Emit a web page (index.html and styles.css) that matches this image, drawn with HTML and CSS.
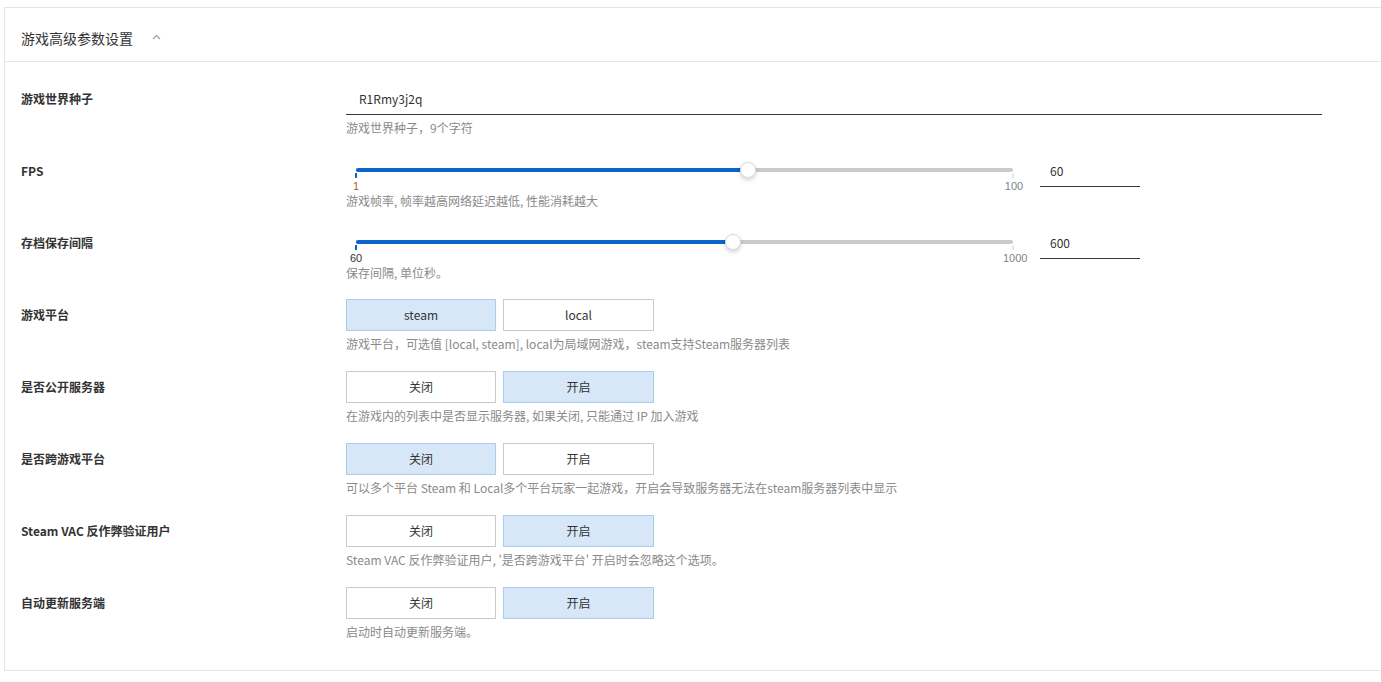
FILE: index.html
```html
<!DOCTYPE html>
<html lang="zh-CN">
<head>
<meta charset="utf-8">
<title>游戏高级参数设置</title>
<link rel="stylesheet" href="styles.css">
</head>
<body>
<div class="card">
  <div class="card-header">
    <span class="card-title">游戏高级参数设置</span>
    <svg class="chevron" width="9" height="6" viewBox="0 0 9 6"><polyline points="1,5 4.5,1.5 8,5" fill="none" stroke="#9aa3ad" stroke-width="1.2"/></svg>
  </div>
  <div class="card-body">
    <div class="row">
      <div class="label">游戏世界种子</div>
      <div class="field">
        <div class="control"><div class="text-input wide">R1Rmy3j2q</div></div>
        <div class="hint">游戏世界种子，9个字符</div>
      </div>
    </div>

    <div class="row slider-row">
      <div class="label">FPS</div>
      <div class="field">
        <div class="control">
          <div class="slider">
            <div class="track">
              <div class="fill" style="width:59.6%"></div>
              <div class="thumb" style="left:59.6%"></div>
            </div>
            <div class="ends"><span class="min">1</span><span class="max">100</span></div>
          </div>
          <div class="text-input small">60</div>
        </div>
        <div class="hint">游戏帧率, 帧率越高网络延迟越低, 性能消耗越大</div>
      </div>
    </div>

    <div class="row slider-row">
      <div class="label">存档保存间隔</div>
      <div class="field">
        <div class="control">
          <div class="slider">
            <div class="track">
              <div class="fill" style="width:57.45%"></div>
              <div class="thumb" style="left:57.45%"></div>
            </div>
            <div class="ends"><span class="min dark">60</span><span class="max">1000</span></div>
          </div>
          <div class="text-input small">600</div>
        </div>
        <div class="hint">保存间隔, 单位秒。</div>
      </div>
    </div>

    <div class="row">
      <div class="label">游戏平台</div>
      <div class="field">
        <div class="control buttons">
          <div class="btn active">steam</div>
          <div class="btn">local</div>
        </div>
        <div class="hint">游戏平台，可选值 [local, steam], local为局域网游戏，steam支持Steam服务器列表</div>
      </div>
    </div>

    <div class="row">
      <div class="label">是否公开服务器</div>
      <div class="field">
        <div class="control buttons">
          <div class="btn">关闭</div>
          <div class="btn active">开启</div>
        </div>
        <div class="hint">在游戏内的列表中是否显示服务器, 如果关闭, 只能通过 IP 加入游戏</div>
      </div>
    </div>

    <div class="row">
      <div class="label">是否跨游戏平台</div>
      <div class="field">
        <div class="control buttons">
          <div class="btn active">关闭</div>
          <div class="btn">开启</div>
        </div>
        <div class="hint">可以多个平台 Steam 和 Local多个平台玩家一起游戏，开启会导致服务器无法在steam服务器列表中显示</div>
      </div>
    </div>

    <div class="row">
      <div class="label">Steam VAC 反作弊验证用户</div>
      <div class="field">
        <div class="control buttons">
          <div class="btn">关闭</div>
          <div class="btn active">开启</div>
        </div>
        <div class="hint">Steam VAC 反作弊验证用户, '是否跨游戏平台' 开启时会忽略这个选项。</div>
      </div>
    </div>

    <div class="row">
      <div class="label">自动更新服务端</div>
      <div class="field">
        <div class="control buttons">
          <div class="btn">关闭</div>
          <div class="btn active">开启</div>
        </div>
        <div class="hint">启动时自动更新服务端。</div>
      </div>
    </div>
  </div>
</div>
</body>
</html>
```

FILE: styles.css
```css
html, body {
  margin: 0;
  padding: 0;
  background: #fff;
  overflow: hidden;
}
body {
  font-family: "Noto Sans CJK SC", "Noto Sans", sans-serif;
  font-size: 12px;
  color: #333;
}
.card {
  margin: 7px 0 0 4px;
  border: 1px solid #e5e5e5;
  border-right: none;
}
.card-header {
  display: flex;
  align-items: center;
  padding: 20px 0 13px 16px;
  border-bottom: 1px solid #e5e5e5;
  line-height: 20px;
}
.card-title {
  font-size: 14px;
  color: #333;
}
.chevron {
  margin-left: 19px;
  margin-top: -2px;
}
.card-body {
  padding: 21px 0 31px 16px;
}
.row {
  display: flex;
  margin-bottom: 20px;
}
.row:last-child {
  margin-bottom: 0;
}
.label {
  width: 325px;
  flex: none;
  line-height: 32px;
  font-weight: bold;
  color: #333;
}
.field {
  display: flex;
  flex-direction: column;
}
.control {
  height: 32px;
  display: flex;
}
.hint {
  margin-top: 6px;
  line-height: 14px;
  color: #8a8a8a;
}
.slider-row {
  margin-bottom: 19px;
}
.slider-row .hint {
  margin-top: 7px;
}
.text-input {
  box-sizing: border-box;
  height: 32px;
  line-height: 32px;
  border-bottom: 1px solid #33383d;
  color: #333;
}
.text-input.wide {
  width: 976px;
  padding-left: 13px;
}
.text-input.small {
  width: 100px;
  padding-left: 10px;
  margin-left: 17px;
}
.slider {
  width: 677px;
  box-sizing: border-box;
  padding: 13px 0 0 0;
}
.track {
  position: relative;
  margin: 0 10px;
  height: 4px;
  border-radius: 2px;
  background: #cacaca;
}
.track::before,
.track::after {
  content: "";
  position: absolute;
  top: 5px;
  width: 2px;
  height: 5px;
}
.track::before {
  left: -1px;
  background: #0a66c8;
}
.track::after {
  right: -1px;
  background: #e6e6e6;
}
.fill {
  height: 4px;
  border-radius: 2px;
  background: #0a66c8;
}
.thumb {
  position: absolute;
  top: -6px;
  width: 16px;
  height: 16px;
  margin-left: -8px;
  box-sizing: border-box;
  border-radius: 50%;
  background: #fff;
  border: 1px solid #dcdcdc;
  box-shadow: 0 2px 4px rgba(0, 0, 0, 0.18);
}
.ends {
  display: flex;
  justify-content: space-between;
  margin-top: 8px;
  line-height: 12px;
  font-family: "Liberation Sans", Arial, sans-serif;
  font-size: 11px;
}
.ends span {
  width: 20px;
  text-align: center;
}
.ends .min {
  color: #a0661e;
}
.ends .min.dark {
  color: #333;
}
.ends .max {
  color: #7d838b;
  width: 22px;
  margin-right: -2px;
}
.buttons {
  gap: 7px;
}
.btn {
  box-sizing: border-box;
  width: 150px;
  height: 32px;
  line-height: 30px;
  text-align: center;
  border: 1px solid #cacaca;
  background: #fff;
  color: #333;
}
.btn + .btn {
  width: 151px;
}
.btn.active {
  background: #d7e7f8;
  border-color: #a9cdef;
}
```
